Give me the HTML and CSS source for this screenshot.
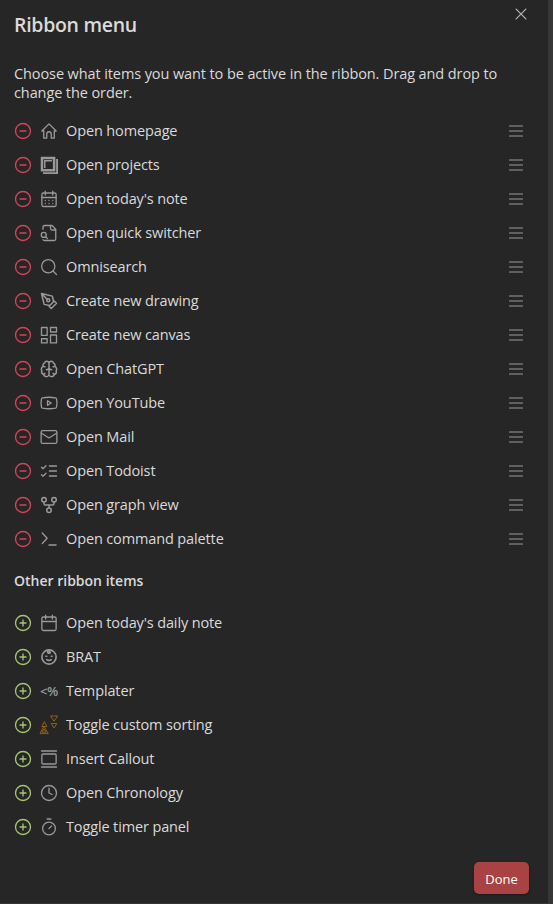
FILE: index.html
```html
<!DOCTYPE html>
<html lang="en">
<head>
<meta charset="utf-8">
<title>Ribbon menu</title>
<link rel="stylesheet" href="styles.css">
</head>
<body>
<svg class="sprite" aria-hidden="true">
  <symbol id="minus" viewBox="0 0 24 24"><circle cx="12" cy="12" r="10"/><path d="M8 12h8"/></symbol>
  <symbol id="plus" viewBox="0 0 24 24"><circle cx="12" cy="12" r="10"/><path d="M8 12h8M12 8v8"/></symbol>
  <symbol id="menu" viewBox="0 0 24 24"><path d="M3.3 5.3h17.400M3.300 12h17.400M3.300 18.700h17.400"/></symbol>
</svg>
<main class="modal">
  <button class="close" aria-label="Close"><svg class="icon" viewBox="0 0 24 24"><path d="M18.500 5.500 5.500 18.500M5.500 5.500l13 13"/></svg></button>
  <h1 class="title">Ribbon menu</h1>
  <p class="intro"><span class="line">Choose what items you want to be active in the ribbon. Drag and drop to</span> <span class="line">change the order.</span></p>
  <ul class="list">
    <li class="item"><svg class="icon remove"><use href="#minus"/></svg><svg class="icon" viewBox="0 0 24 24"><path d="M5 12H2.500L12 2.500l9.500 9.500H19M5 12v9.500h4V16a3 3 0 0 1 6 0v5.500h4V12"/></svg><span class="label">Open homepage</span><svg class="icon handle"><use href="#menu"/></svg></li>
    <li class="item"><svg class="icon remove"><use href="#minus"/></svg><svg class="icon solid" viewBox="0 0 24 24"><path fill-rule="evenodd" d="M1 1h19.500v19.500H1zM4.200 4.200v13h13v-13zM5.300 5.300h10.800v10.800H5.300zM7.300 7.300v8.800h8.800V7.300zM21.500 4H24v20H4v-2.500h17.500z"/></svg><span class="label">Open projects</span><svg class="icon handle"><use href="#menu"/></svg></li>
    <li class="item"><svg class="icon remove"><use href="#minus"/></svg><svg class="icon" viewBox="0 0 24 24"><rect x="2.500" y="4" width="19" height="18" rx="2"/><path d="M7 1.500v5M17 1.500v5M2.500 10h19M7 14h.01M12 14h.01M17 14h.01M7 18h.01M12 18h.01M17 18h.01"/></svg><span class="label">Open today's note</span><svg class="icon handle"><use href="#menu"/></svg></li>
    <li class="item"><svg class="icon remove"><use href="#minus"/></svg><svg class="icon" viewBox="0 0 24 24"><path d="M14 2v4a2 2 0 0 0 2 2h5M4 21a2 2 0 0 0 2 1h13a2 2 0 0 0 2-2V7l-5-5H6a2 2 0 0 0-2 2v3M7.500 17 10 19.500"/><circle cx="5" cy="14.500" r="3.300"/></svg><span class="label">Open quick switcher</span><svg class="icon handle"><use href="#menu"/></svg></li>
    <li class="item"><svg class="icon remove"><use href="#minus"/></svg><svg class="icon" viewBox="0 0 24 24"><circle cx="11" cy="11" r="8.800"/><path d="m22 22-4.700-4.700"/></svg><span class="label">Omnisearch</span><svg class="icon handle"><use href="#menu"/></svg></li>
    <li class="item"><svg class="icon remove"><use href="#minus"/></svg><svg class="icon medium" viewBox="0 0 24 24"><path d="m12 19 7-7 3 3-7 7zM18 13l-1.500-7.500L2 2l3.500 14.500L13 18zM2 2l7.586 7.586"/><circle cx="11" cy="11" r="2"/></svg><span class="label">Create new drawing</span><svg class="icon handle"><use href="#menu"/></svg></li>
    <li class="item"><svg class="icon remove"><use href="#minus"/></svg><svg class="icon" viewBox="0 0 24 24"><rect x="2" y="2" width="7.500" height="10.500"/><rect x="14" y="2" width="8" height="6"/><rect x="14" y="12" width="8" height="10.500"/><rect x="2" y="17" width="7.500" height="5.500"/></svg><span class="label">Create new canvas</span><svg class="icon handle"><use href="#menu"/></svg></li>
    <li class="item"><svg class="icon remove"><use href="#minus"/></svg><svg class="icon medium" viewBox="0 0 24 24"><path d="M12 4.500a3 3 0 0 0-5.900-.4C4 4.800 3.600 7 4.200 8.500 1.800 9.800 1.300 12.500 2.400 14.500c-.6 2 .3 4 2.200 4.700C5.300 22.500 10 23.500 12 20M12 4.500a3 3 0 0 1 5.900-.4c2.100.7 2.500 2.900 1.900 4.400 2.400 1.300 2.900 4 1.800 6 .6 2-.3 4-2.200 4.700-.7 3.300-5.400 4.300-7.400.8M12 4.500V20M8.500 13c1.800-.2 3.500-1.200 3.500-3 0 1.800 1.700 2.800 3.500 3M4.200 8.500 6.500 9M19.800 8.500 17.500 9M4.600 19.200 6.500 18M19.400 19.200 17.500 18"/></svg><span class="label">Open ChatGPT</span><svg class="icon handle"><use href="#menu"/></svg></li>
    <li class="item"><svg class="icon remove"><use href="#minus"/></svg><svg class="icon" viewBox="0 0 24 24"><path d="M2 17.500a24 24 0 0 1 0-11 2 2 0 0 1 1.400-1.400 50 50 0 0 1 17.200 0A2 2 0 0 1 22 6.500a24 24 0 0 1 0 11 2 2 0 0 1-1.400 1.400 50 50 0 0 1-17.200 0A2 2 0 0 1 2 17.500m8-2.500 5-3-5-3z"/></svg><span class="label">Open YouTube</span><svg class="icon handle"><use href="#menu"/></svg></li>
    <li class="item"><svg class="icon remove"><use href="#minus"/></svg><svg class="icon" viewBox="0 0 24 24"><rect x="1.500" y="3.500" width="21" height="17" rx="2"/><path d="m22 7-8.970 5.700a1.940 1.940 0 0 1-2.060 0L2 7"/></svg><span class="label">Open Mail</span><svg class="icon handle"><use href="#menu"/></svg></li>
    <li class="item"><svg class="icon remove"><use href="#minus"/></svg><svg class="icon" viewBox="0 0 24 24"><path d="m2 17 2 2 4-4M2 7l2 2 4-4M12.500 5.300H22M12.500 12H22M12.500 18.700H22"/></svg><span class="label">Open Todoist</span><svg class="icon handle"><use href="#menu"/></svg></li>
    <li class="item"><svg class="icon remove"><use href="#minus"/></svg><svg class="icon medium" viewBox="0 0 24 24"><circle cx="12" cy="19" r="3"/><circle cx="5.300" cy="5" r="3"/><circle cx="18.700" cy="5" r="3"/><path d="M5.300 8v2a2 2 0 0 0 2 2h9.400a2 2 0 0 0 2-2V8M12 12v4"/></svg><span class="label">Open graph view</span><svg class="icon handle"><use href="#menu"/></svg></li>
    <li class="item"><svg class="icon remove"><use href="#minus"/></svg><svg class="icon" viewBox="0 0 24 24"><path d="m3 18 6.500-7L3 4M12 20h9.500"/></svg><span class="label">Open command palette</span><svg class="icon handle"><use href="#menu"/></svg></li>
  </ul>
  <h2 class="subtitle">Other ribbon items</h2>
  <ul class="list">
    <li class="item"><svg class="icon add"><use href="#plus"/></svg><svg class="icon" viewBox="0 0 24 24"><rect x="2.500" y="4" width="19" height="18" rx="2"/><path d="M7.500 1.500v5M16.500 1.500v5M2.500 10h19"/></svg><span class="label">Open today's daily note</span></li>
    <li class="item"><svg class="icon add"><use href="#plus"/></svg><svg class="icon thick" viewBox="0 0 24 24"><circle cx="12" cy="12" r="9.500"/><path d="M8 11h1M15 11h1M9 15.500c2 1.500 4 1.500 6 0M12 2.500c-3 1.500-2 5 .5 4.500 1.500-.3 1.500-2 0-2"/></svg><span class="label">BRAT</span></li>
    <li class="item"><svg class="icon add"><use href="#plus"/></svg><span class="code">&lt;%</span><span class="label">Templater</span></li>
    <li class="item"><svg class="icon add"><use href="#plus"/></svg><svg class="icon sorting" viewBox="0 0 24 24"><path d="M6 8 9 14H3zM5.500 14 11 23.500H.500zM5.500 17.500 8 21.500H3zM14.500 0h9l-4.500 6.500zM15.500 10h7l-3.500 5.500z"/></svg><span class="label">Toggle custom sorting</span></li>
    <li class="item"><svg class="icon add"><use href="#plus"/></svg><svg class="icon" viewBox="0 0 24 24"><path d="M2 1.300h20M2 22.700h20"/><rect x="2.500" y="5.300" width="19" height="13.400" rx="1.500"/></svg><span class="label">Insert Callout</span></li>
    <li class="item"><svg class="icon add"><use href="#plus"/></svg><svg class="icon" viewBox="0 0 24 24"><circle cx="12" cy="12" r="10"/><path d="M12 5.500V12l4 2"/></svg><span class="label">Open Chronology</span></li>
    <li class="item"><svg class="icon add"><use href="#plus"/></svg><svg class="icon" viewBox="0 0 24 24"><path d="M9.500 1.300h5M12 14l3.500-3.500"/><circle cx="12" cy="14" r="8.500"/></svg><span class="label">Toggle timer panel</span></li>
  </ul>
  <footer class="footer"><button class="done">Done</button></footer>
</main>
</body>
</html>
```
FILE: styles.css
```css
* { box-sizing: border-box; }
body {
  margin: 0;
  height: 904px;
  overflow: hidden;
  background: #363636;
  color: #dadada;
  font: 14.5px/19px "Open Sans", "Noto Sans", sans-serif;
}
.sprite { display: none; }
.modal {
  position: relative;
  display: flex;
  flex-direction: column;
  width: 548px;
  height: 903px;
  padding: 11px 19px 9px 14px;
  background: #262626;
}
button { border: 0; font: inherit; }
.close {
  position: absolute;
  top: 5px;
  right: 18px;
  width: 18px;
  height: 18px;
  padding: 0;
  background: none;
}
.close .icon { color: #b3b3b3; }
.title {
  margin: 0;
  font-size: 19.5px;
  font-weight: 600;
  line-height: 28px;
  letter-spacing: -0.3px;
}
.intro { margin: 25px 0 12px; letter-spacing: -0.1px; }
.line { display: block; white-space: nowrap; }
.list { margin: 0; padding: 0; list-style: none; }
.item {
  display: flex;
  align-items: center;
  gap: 8px;
  height: 34px;
  padding-right: 4px;
}
.icon {
  display: block;
  flex: none;
  width: 18px;
  height: 18px;
  overflow: visible;
  color: #999;
  fill: none;
  stroke: currentColor;
  stroke-width: 1.75;
  stroke-linecap: round;
  stroke-linejoin: round;
}
.remove { color: #d5445a; }
.add { color: #a8c373; }
.medium { stroke-width: 2; }
.thick { stroke-width: 2.2; }
.solid { fill: currentColor; stroke: none; }
.sorting { color: #a96b0b; stroke-width: 1.1; }
.handle { margin-left: auto; stroke-width: 1.5; }
.code {
  width: 18px;
  color: #999;
  font-size: 13px;
  font-weight: 600;
  line-height: 18px;
  letter-spacing: -0.4px;
}
.label {
  padding-bottom: 2px;
  white-space: nowrap;
  letter-spacing: -0.13px;
}
.subtitle {
  margin: 15px 0 16px;
  font-size: 14px;
  font-weight: 600;
  line-height: 19px;
}
.footer { display: flex; justify-content: flex-end; margin-top: auto; }
.done {
  width: 55px;
  height: 32px;
  padding: 2px 0 0;
  border-radius: 5px;
  background: #a94242;
  box-shadow: 0 1px 3px rgba(0, 0, 0, .35);
  color: #fff;
  font-size: 13px;
}
```
